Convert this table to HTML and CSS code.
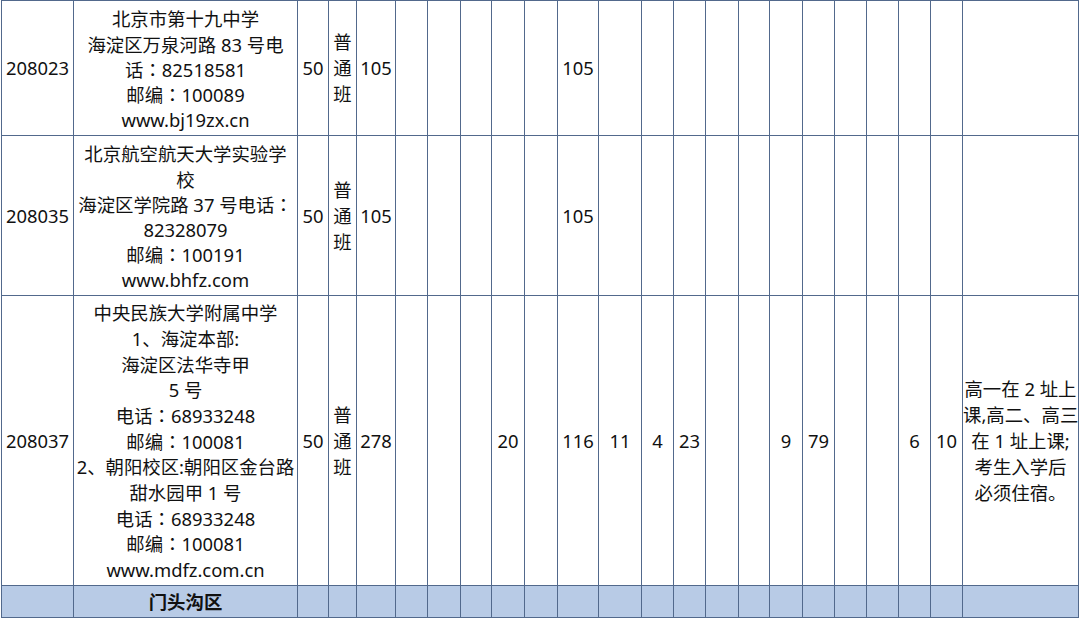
FILE: index.html
```html
<!DOCTYPE html>
<html lang="zh-CN">
<head>
<meta charset="utf-8">
<title>招生计划</title>
<link rel="stylesheet" href="styles.css">
</head>
<body>
<table class="plan">
  <colgroup>
    <col class="w72"><col class="w224"><col class="w31"><col class="w28"><col class="w39">
    <col class="w32"><col class="w33"><col class="w31"><col class="w33"><col class="w33">
    <col class="w41"><col class="w43"><col class="w32"><col class="w32"><col class="w33">
    <col class="w31"><col class="w33"><col class="w32"><col class="w32"><col class="w32">
    <col class="w32"><col class="w32"><col class="w116">
  </colgroup>
  <tbody>
    <tr class="r1">
      <td>208023</td>
      <td class="school">北京市第十九中学<br>海淀区万泉河路 83 号电<br>话<span class="colon">：</span>82518581<br>邮编<span class="colon">：</span>100089<br>www.bj19zx.cn</td>
      <td>50</td>
      <td class="vert">普<br>通<br>班</td>
      <td>105</td>
      <td></td><td></td><td></td><td></td><td></td>
      <td>105</td>
      <td></td><td></td><td></td><td></td><td></td><td></td><td></td><td></td><td></td><td></td><td></td>
      <td class="note"></td>
    </tr>
    <tr class="r2">
      <td>208035</td>
      <td class="school">北京航空航天大学实验学<br>校<br>海淀区学院路 37 号电话<span class="colon">：</span><br>82328079<br>邮编<span class="colon">：</span>100191<br>www.bhfz.com</td>
      <td>50</td>
      <td class="vert">普<br>通<br>班</td>
      <td>105</td>
      <td></td><td></td><td></td><td></td><td></td>
      <td>105</td>
      <td></td><td></td><td></td><td></td><td></td><td></td><td></td><td></td><td></td><td></td><td></td>
      <td class="note"></td>
    </tr>
    <tr class="r3">
      <td>208037</td>
      <td class="school tall">中央民族大学附属中学<br>1、海淀本部:<br>海淀区法华寺甲<br>5 号<br>电话<span class="colon">：</span>68933248<br>邮编<span class="colon">：</span>100081<br>2、朝阳校区:朝阳区金台路<br>甜水园甲 1 号<br>电话<span class="colon">：</span>68933248<br>邮编<span class="colon">：</span>100081<br>www.mdfz.com.cn</td>
      <td>50</td>
      <td class="vert">普<br>通<br>班</td>
      <td>278</td>
      <td></td><td></td><td></td>
      <td>20</td>
      <td></td>
      <td>116</td>
      <td>11</td>
      <td>4</td>
      <td>23</td>
      <td></td><td></td>
      <td>9</td>
      <td>79</td>
      <td></td><td></td>
      <td>6</td>
      <td>10</td>
      <td class="note">高一在 2 址上<br>课,高二、高三<br>在 1 址上课;<br>考生入学后<br>必须住宿。</td>
    </tr>
    <tr class="r4 district">
      <td></td>
      <td class="dname">门头沟区</td>
      <td></td><td></td><td></td><td></td><td></td><td></td><td></td><td></td><td></td><td></td>
      <td></td><td></td><td></td><td></td><td></td><td></td><td></td><td></td><td></td><td></td>
      <td></td>
    </tr>
  </tbody>
</table>
</body>
</html>
```

FILE: styles.css
```css
html, body {
  margin: 0;
  padding: 0;
  background: #ffffff;
}

body {
  font-family: "Noto Sans", "Noto Sans CJK SC", sans-serif;
  font-size: 18.4px;
  color: #111111;
  overflow: hidden;
}

.plan {
  border-collapse: collapse;
  table-layout: fixed;
  width: 1078px;
  margin-left: 1px;
}

.plan td {
  border: 1px solid #52698c;
  padding: 0;
  text-align: center;
  vertical-align: middle;
  line-height: 25.2px;
  white-space: nowrap;
  overflow: visible;
}

.w72 { width: 72px; }
.w224 { width: 224px; }
.w31 { width: 31px; }
.w28 { width: 28px; }
.w39 { width: 39px; }
.w32 { width: 32px; }
.w33 { width: 33px; }
.w41 { width: 41px; }
.w43 { width: 43px; }
.w116 { width: 116px; }

.r1 { height: 135px; }
.r2 { height: 160px; }
.r3 { height: 290px; }
.r4 { height: 32px; }

.plan td.school {
  padding-top: 3px;
}

.plan td.tall {
  line-height: 25.7px;
  padding-top: 2px;
}

.colon {
  font-family: "Noto Sans CJK JP", sans-serif;
  font-feature-settings: "locl" 0;
}

.plan td.vert {
  line-height: 26px;
}

.plan td.note {
  line-height: 26px;
}

.district td {
  background: #b8cbe6;
}

.plan td.dname {
  font-weight: bold;
}
```
